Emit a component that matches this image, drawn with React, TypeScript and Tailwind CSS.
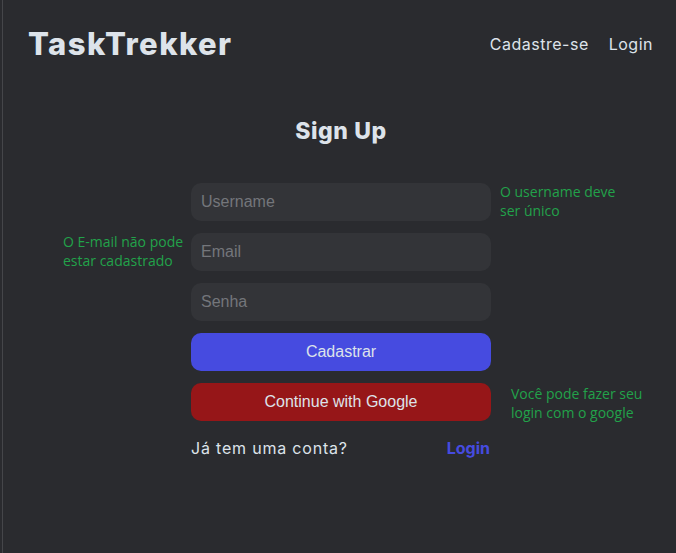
import React from "react";

export default function App() {
  const poppins = { fontFamily: "Inter, 'Noto Sans', sans-serif" };
  const note = { fontFamily: "'Open Sans', 'Noto Sans', sans-serif" };
  return (
    <div className="min-h-[553px] w-full bg-[#2a2b2f] relative" style={poppins}>
      <div className="absolute left-[2px] top-0 bottom-0 w-px bg-[#45464a]" />
      <header className="flex items-center justify-between pl-[28px] pr-[23px] pt-[24px]">
        <h1 className="text-[31px] font-extrabold text-[#dde3ea] tracking-[1.4px] leading-[40px]">TaskTrekker</h1>
        <nav className="flex gap-[20px] text-[16px] text-[#dde3ea] tracking-[0.5px]">
          <a>Cadastre-se</a>
          <a>Login</a>
        </nav>
      </header>
      <main className="flex flex-col items-center pt-[50px] pl-[6px]">
        <h2 className="text-[23px] font-extrabold text-[#dde3ea] leading-[34px] tracking-[0.6px]">Sign Up</h2>
        <div className="relative w-[300px] mt-[35px] flex flex-col gap-[12px]" style={{ fontFamily: "'Liberation Sans', Arial, sans-serif" }}>
          <input placeholder="Username" className="h-[38px] rounded-[10px] bg-[#333438] px-[10px] text-[16px] text-white placeholder:text-[#74767b] outline-none" />
          <input placeholder="Email" className="h-[38px] rounded-[10px] bg-[#333438] px-[10px] text-[16px] text-white placeholder:text-[#74767b] outline-none" />
          <input placeholder="Senha" className="h-[38px] rounded-[10px] bg-[#333438] px-[10px] text-[16px] text-white placeholder:text-[#74767b] outline-none" />
          <button className="h-[38px] rounded-[10px] bg-[#464be0] text-[16px] text-[#dde3ea]">Cadastrar</button>
          <button className="h-[38px] rounded-[10px] bg-[#961618] text-[16px] text-[#dde3ea]">Continue with Google</button>
          <div className="flex justify-between items-center mt-[3px] text-[16px]" style={poppins}>
            <span className="text-[#dde3ea] tracking-[0.8px]">Já tem uma conta?</span>
            <a className="font-bold text-[#464be0] pr-px">Login</a>
          </div>
          <div className="absolute left-[309px] top-[-1px] whitespace-nowrap text-[14px] font-medium leading-[19px] text-[#22a24a]" style={note}>
            O username deve<br />ser único
          </div>
          <div className="absolute left-[-128px] top-[49px] whitespace-nowrap text-[14px] font-medium leading-[19px] text-[#22a24a]" style={note}>
            O E-mail não pode<br />estar cadastrado
          </div>
          <div className="absolute left-[320px] top-[201px] whitespace-nowrap text-[14px] font-medium leading-[19px] text-[#22a24a]" style={note}>
            Você pode fazer seu<br />login com o google
          </div>
        </div>
      </main>
    </div>
  );
}
